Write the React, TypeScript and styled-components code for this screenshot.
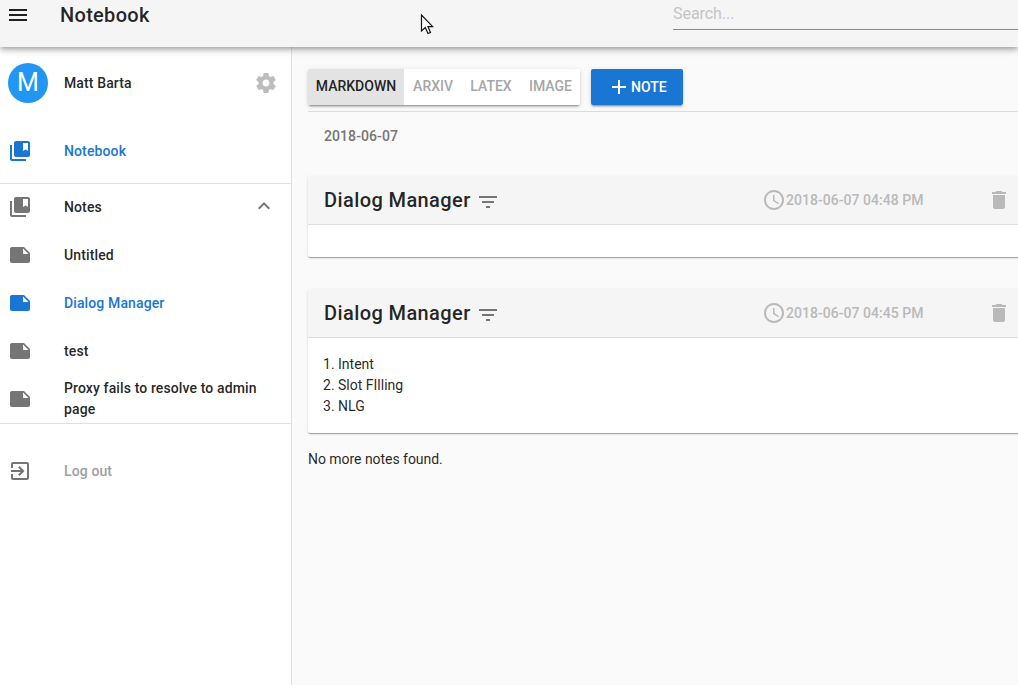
import React from "react";
import styled, { createGlobalStyle, css } from "styled-components";

const GlobalStyle = createGlobalStyle`
  *, *::before, *::after { box-sizing: border-box; }
  body {
    margin: 0;
    background: #fafafa;
    color: rgba(0, 0, 0, 0.87);
    font: 400 14px/1.5 Roboto, sans-serif;
    overflow: hidden;
  }
`;

const paths = {
  menu: "M3 18h18v-2H3v2zm0-5h18v-2H3v2zm0-7v2h18V6H3z",
  settings:
    "M19.43 12.98c.04-.32.07-.64.07-.98s-.03-.66-.07-.98l2.11-1.65c.19-.15.24-.42.12-.64l-2-3.46c-.12-.22-.39-.3-.61-.22l-2.49 1c-.52-.4-1.08-.73-1.69-.98l-.38-2.65C14.46 2.18 14.25 2 14 2h-4c-.25 0-.46.18-.49.42l-.38 2.65c-.61.25-1.17.59-1.69.98l-2.49-1c-.23-.09-.49 0-.61.22l-2 3.46c-.13.22-.07.49.12.64l2.11 1.65c-.04.32-.07.65-.07.98s.03.66.07.98l-2.11 1.65c-.19.15-.24.42-.12.64l2 3.46c.12.22.39.3.61.22l2.49-1c.52.4 1.08.73 1.69.98l.38 2.65c.03.24.24.42.49.42h4c.25 0 .46-.18.49-.42l.38-2.65c.61-.25 1.17-.59 1.69-.98l2.49 1c.23.09.49 0 .61-.22l2-3.46c.12-.22.07-.49-.12-.64l-2.11-1.65zM12 15.5c-1.93 0-3.5-1.57-3.5-3.5s1.57-3.5 3.5-3.5 3.5 1.57 3.5 3.5-1.57 3.5-3.5 3.5z",
  book: "M4 6H2v14c0 1.100.9 2 2 2h14v-2H4V6zM20 2H8c-1.100 0-2 .9-2 2v12c0 1.100.9 2 2 2h12c1.100 0 2-.9 2-2V4c0-1.100-.9-2-2-2zm0 10l-2.500-1.500L15 12V4h5v8z",
  note: "M22 10l-6-6H4c-1.100 0-2 .9-2 2v12.010c0 1.100.9 1.990 2 1.990l16-.010c1.100 0 2-.890 2-1.990v-8zm-7-4.500l5.500 5.500H15V5.500z",
  up: "M12 8l-6 6 1.410 1.410L12 10.830l4.590 4.580L18 14z",
  exit: "M10.090 15.590L11.500 17l5-5-5-5-1.410 1.410L12.670 11H3v2h9.670l-2.580 2.590zM19 3H5c-1.110 0-2 .9-2 2v4h2V5h14v14H5v-4H3v4c0 1.100.890 2 2 2h14c1.100 0 2-.9 2-2V5c0-1.100-.9-2-2-2z",
  add: "M19 13h-6v6h-2v-6H5v-2h6V5h2v6h6v2z",
  filter: "M10 18h4v-2h-4v2zM3 6v2h18V6H3zm3 7h12v-2H6v2z",
  clock:
    "M11.990 2C6.470 2 2 6.480 2 12s4.470 10 9.990 10C17.520 22 22 17.520 22 12S17.520 2 11.990 2zM12 20c-4.420 0-8-3.580-8-8s3.580-8 8-8 8 3.580 8 8-3.580 8-8 8zM12.500 7H11v6l5.250 3.150.750-1.230-4.500-2.670z",
  trash: "M6 19c0 1.100.9 2 2 2h8c1.100 0 2-.9 2-2V7H6v12zM19 4h-3.500l-1-1h-5l-1 1H5v2h14V4z",
};

const Svg = styled.svg<{ $size: number }>`
  display: block;
  flex: none;
  width: ${(p) => p.$size}px;
  height: ${(p) => p.$size}px;
  fill: currentColor;
`;

function Icon({ name, size = 24 }: { name: keyof typeof paths; size?: number }) {
  return (
    <Svg $size={size} viewBox="0 0 24 24" aria-hidden="true">
      <path d={paths[name]} />
    </Svg>
  );
}

const Shell = styled.div`
  display: flex;
  flex-direction: column;
  height: 685px;
  overflow: hidden;
`;

const TopBar = styled.header`
  position: relative;
  z-index: 2;
  flex: none;
  display: flex;
  align-items: flex-start;
  height: 47px;
  padding-left: 6px;
  background: #f5f5f5;
  box-shadow: 0 2px 4px -1px rgba(0, 0, 0, 0.2), 0 4px 5px 0 rgba(0, 0, 0, 0.14),
    0 1px 10px 0 rgba(0, 0, 0, 0.12);
`;

const MenuButton = styled.div`
  padding-top: 3px;
`;

const BarTitle = styled.h1`
  flex: 1;
  margin: 0 0 0 30px;
  font-size: 20px;
  font-weight: 500;
  line-height: 30px;
  letter-spacing: 0.3px;
`;

const SearchField = styled.div`
  width: 345px;
  height: 30px;
  border-bottom: 1px solid #8b8b8b;
  font-size: 16px;
  line-height: 27px;
  letter-spacing: -0.05px;
  color: #c4c4c4;
`;

const Body = styled.div`
  flex: 1;
  display: flex;
  min-height: 0;
`;

const Sidebar = styled.nav`
  flex: none;
  width: 292px;
  padding-top: 12px;
  background: #fff;
  border-right: 1px solid #e0e0e0;
`;

const NavGroup = styled.div<{ $top?: number; $bottom?: number; $line?: boolean }>`
  padding-top: ${(p) => p.$top ?? 0}px;
  padding-bottom: ${(p) => p.$bottom ?? 0}px;
  ${(p) => p.$line && css`box-shadow: inset 0 1px #e0e0e0;`}
`;

const NavRow = styled.div<{ $active?: boolean; $muted?: boolean }>`
  display: flex;
  align-items: center;
  height: 48px;
  padding: 0 13px 0 8px;
  font-weight: 500;
  letter-spacing: 0.12px;
  color: ${(p) => (p.$active ? "#1976d2" : p.$muted ? "#9e9e9e" : "rgba(0,0,0,.87)")};
`;

const NavIcon = styled.span<{ $active?: boolean }>`
  flex: none;
  width: 56px;
  color: ${(p) => (p.$active ? "#1976d2" : "#757575")};
`;

const NavLabel = styled.span`
  flex: 1;
  max-width: 200px;
`;

const NavAction = styled.span<{ $faded?: boolean }>`
  margin-left: auto;
  color: ${(p) => (p.$faded ? "#bdbdbd" : "#757575")};
  ${(p) => !p.$faded && css`padding: 0 2px 2px 0;`}
`;

const Avatar = styled.span`
  display: grid;
  place-items: center;
  width: 40px;
  height: 40px;
  margin-right: 16px;
  border-radius: 50%;
  background: #2196f3;
  color: #fff;
  font-size: 25px;
  font-weight: 400;
  line-height: 40px;
`;

const Main = styled.main`
  flex: 1;
  min-width: 0;
  padding: 22px 0 0 16px;
`;

const Toolbar = styled.div`
  display: flex;
  gap: 11px;
  height: 43px;
  border-bottom: 1px solid #dcdcdc;
`;

const raised = css`
  border-radius: 2px;
  box-shadow: 0 3px 1px -2px rgba(0, 0, 0, 0.2), 0 2px 2px 0 rgba(0, 0, 0, 0.14),
    0 1px 5px 0 rgba(0, 0, 0, 0.12);
`;

const Toggle = styled.div`
  display: flex;
  width: 272px;
  height: 36px;
  background: #fff;
  overflow: hidden;
  ${raised}
`;

const ToggleButton = styled.button<{ $selected?: boolean }>`
  flex: ${(p) => (p.$selected ? "0 0 96px" : "auto")};
  padding: ${(p) => (p.$selected ? "0 7px 2px" : "0 7px 2px 8px")};
  border: 0;
  font: 500 14px Roboto, sans-serif;
  background: ${(p) => (p.$selected ? "#e3e3e3" : "#fff")};
  color: ${(p) => (p.$selected ? "rgba(0,0,0,.87)" : "#a6a6a6")};
`;

const AddButton = styled.button`
  display: flex;
  align-items: center;
  width: 92px;
  height: 36px;
  padding: 0 0 0 16px;
  border: 0;
  background: #1976d2;
  color: #fff;
  font: 500 14px Roboto, sans-serif;
  ${raised}
`;

const DayHeading = styled.div`
  height: 64px;
  padding-left: 16px;
  font-weight: 500;
  line-height: 48px;
  letter-spacing: 0.08px;
  color: #757575;
`;

const Card = styled.article`
  margin-bottom: 32px;
  margin-right: -10px;
  border-radius: 2px;
  background: #fff;
  box-shadow: 0 2px 1px -1px rgba(0, 0, 0, 0.2), 0 1px 1px 0 rgba(0, 0, 0, 0.14),
    0 1px 3px 0 rgba(0, 0, 0, 0.12);
`;

const CardHead = styled.header`
  display: flex;
  align-items: center;
  height: 49px;
  padding: 0 17px 0 16px;
  border-bottom: 1px solid #dedede;
  border-radius: 2px 2px 0 0;
  background: #f5f5f5;
  color: #b9b9b9;
`;

const CardTitle = styled.h2`
  margin: 0 5px 0 0;
  font-size: 20px;
  font-weight: 500;
  line-height: 30px;
  letter-spacing: 0.02em;
  color: rgba(0, 0, 0, 0.87);
`;

const FilterIcon = styled.span`
  flex: 1;
  padding-top: 4px;
  color: #757575;
`;

const Timestamp = styled.time`
  display: flex;
  align-items: center;
  width: 225px;
  font-weight: 500;
  letter-spacing: 0.04px;
`;

const CardBody = styled.div`
  padding: 16px 15px;
`;

const Items = styled.ol`
  margin: 0;
  padding: 0;
  list-style: none;
`;

const EndNote = styled.p`
  margin: -17px 0 0;
  padding-top: 1px;
  letter-spacing: -0.04px;
`;

const Pointer = styled.svg`
  position: absolute;
  left: 420px;
  top: 13px;
  width: 14px;
  height: 22px;
`;

const notes = [
  { title: "Untitled" },
  { title: "Dialog Manager", active: true },
  { title: "test" },
  { title: "Proxy fails to resolve to admin page" },
];

const cards = [
  { time: "2018-06-07 04:48 PM", items: [] as string[] },
  { time: "2018-06-07 04:45 PM", items: ["Intent", "Slot FIlling", "NLG"] },
];

const kinds = ["MARKDOWN", "ARXIV", "LATEX", "IMAGE"];

export default function App() {
  return (
    <Shell>
      <GlobalStyle />
      <TopBar>
        <MenuButton><Icon name="menu" /></MenuButton>
        <BarTitle>Notebook</BarTitle>
        <SearchField>Search...</SearchField>
        <Pointer viewBox="0 0 14 22">
          <path d="M1.500 2V18L5.300 14.500L8 20.500L10.500 19.500L8 13.700H12.700Z" fill="#fff" stroke="#111" strokeWidth="1.200" />
        </Pointer>
      </TopBar>
      <Body>
        <Sidebar>
          <NavGroup $bottom={20}>
            <NavRow>
              <Avatar>M</Avatar>
              <NavLabel>Matt Barta</NavLabel>
              <NavAction $faded><Icon name="settings" /></NavAction>
            </NavRow>
          </NavGroup>
          <NavGroup $bottom={8}>
            <NavRow $active>
              <NavIcon $active><Icon name="book" /></NavIcon>
              <NavLabel>Notebook</NavLabel>
            </NavRow>
          </NavGroup>
          <NavGroup $line>
            <NavRow>
              <NavIcon><Icon name="book" /></NavIcon>
              <NavLabel>Notes</NavLabel>
              <NavAction><Icon name="up" /></NavAction>
            </NavRow>
            {notes.map((n) => (
              <NavRow key={n.title} $active={n.active}>
                <NavIcon $active={n.active}><Icon name="note" /></NavIcon>
                <NavLabel>{n.title}</NavLabel>
              </NavRow>
            ))}
          </NavGroup>
          <NavGroup $line $top={24}>
            <NavRow $muted>
              <NavIcon><Icon name="exit" /></NavIcon>
              <NavLabel>Log out</NavLabel>
            </NavRow>
          </NavGroup>
        </Sidebar>
        <Main>
          <Toolbar>
            <Toggle>
              {kinds.map((k, i) => (
                <ToggleButton key={k} $selected={i === 0}>{k}</ToggleButton>
              ))}
            </Toggle>
            <AddButton><Icon name="add" />NOTE</AddButton>
          </Toolbar>
          <DayHeading>2018-06-07</DayHeading>
          {cards.map((c) => (
            <Card key={c.time}>
              <CardHead>
                <CardTitle>Dialog Manager</CardTitle>
                <FilterIcon><Icon name="filter" /></FilterIcon>
                <Timestamp><Icon name="clock" />{c.time}</Timestamp>
                <Icon name="trash" />
              </CardHead>
              <CardBody>
                {c.items.length > 0 && (
                  <Items>
                    {c.items.map((t, i) => (
                      <li key={t}>{i + 1}. {t}</li>
                    ))}
                  </Items>
                )}
              </CardBody>
            </Card>
          ))}
          <EndNote>No more notes found.</EndNote>
        </Main>
      </Body>
    </Shell>
  );
}
